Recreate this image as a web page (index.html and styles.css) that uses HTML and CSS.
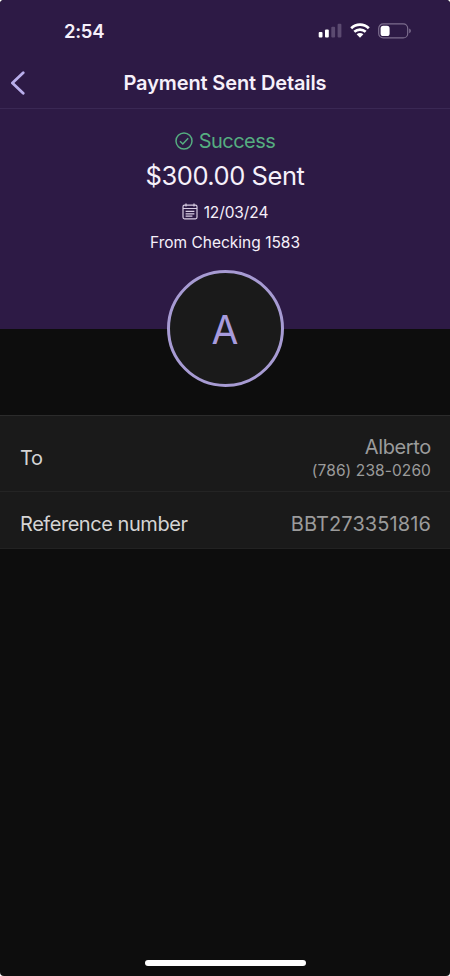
FILE: index.html
```html
<!DOCTYPE html>
<html lang="en">
<head>
    <meta charset="UTF-8">
    <meta name="viewport" content="width=device-width, initial-scale=1.0">
    <title>Payment Sent Details</title>
    <link rel="stylesheet" href="styles.css">
</head>
<body>

    <div class="screen">
        <!-- Status bar -->
        <div class="status-bar">
            <span class="time">2:54</span>
            <div class="status-icons">
                <svg class="signal" width="24" height="16" viewBox="0 0 24 16">
                    <rect x="0.7" y="9" width="3.8" height="5.6" rx="1"/>
                    <rect x="7" y="6.5" width="3.8" height="8.1" rx="1"/>
                    <rect class="dim" x="13.3" y="3.7" width="3.8" height="10.9" rx="1"/>
                    <rect class="dim" x="19.6" y="0.7" width="3.8" height="13.9" rx="1"/>
                </svg>
                <svg class="wifi" width="20" height="16" viewBox="0 0 20 16">
                    <path d="M1.2 5.3C6.2 0.5 13.8 0.5 18.8 5.3"/>
                    <path d="M4.3 8.8C7.6 5.8 12.4 5.8 15.7 8.8"/>
                    <path class="dot" d="M6.6 11.3C8.6 9.5 11.4 9.5 13.4 11.3L10 14.8Z"/>
                </svg>
                <svg class="battery" width="34" height="16" viewBox="0 0 34 16">
                    <rect class="shell" x="0.7" y="0.9" width="29" height="14" rx="4.5"/>
                    <rect class="level" x="2.6" y="2.8" width="9" height="10.2" rx="2.6"/>
                    <path class="tip" d="M31.2 5.6C33.4 6.4 33.4 9.4 31.2 10.2Z"/>
                </svg>
            </div>
        </div>

        <!-- Title bar -->
        <div class="nav-bar">
            <svg class="back" width="16" height="24" viewBox="0 0 16 24">
                <path d="M13.2 1.8 2.4 12 13.2 22.2"/>
            </svg>
            <h1>Payment Sent Details</h1>
        </div>

        <!-- Payment summary -->
        <div class="summary">
            <div class="status">
                <svg width="18" height="18" viewBox="0 0 18 18">
                    <circle cx="9" cy="9" r="8"/>
                    <path d="M5 9.2 7.8 12 13.2 6.2"/>
                </svg>
                <span>Success</span>
            </div>
            <div class="amount">$300.00 Sent</div>
            <div class="date">
                <svg width="16" height="17" viewBox="0 0 16 17">
                    <rect x="1" y="2.2" width="14" height="13.6" rx="1.5"/>
                    <path d="M1 5.5H15M4 0.5V3.6M12 0.5V3.6M3.6 8.4H12.4M3.6 10.8H12.4M3.6 13.2H10.4"/>
                </svg>
                <span>12/03/24</span>
            </div>
            <div class="account">From Checking 1583</div>
            <div class="avatar"><span>A</span></div>
        </div>

        <!-- Details -->
        <div class="details">
            <div class="row row-to">
                <span class="label">To</span>
                <div class="value">
                    <div class="name">Alberto</div>
                    <div class="phone">(786) 238-0260</div>
                </div>
            </div>
            <div class="row row-reference">
                <span class="label">Reference number</span>
                <span class="value reference">BBT273351816</span>
            </div>
        </div>

        <div class="home-indicator"></div>
    </div>

</body>
</html>
```
FILE: styles.css
```css
body {
    margin: 0;
    background-color: #ffffff;
    font-family: 'Inter', 'Liberation Sans', sans-serif;
    color: #f6f0fa;
}

.screen {
    display: flex;
    flex-direction: column;
    width: 100%;
    height: 976px;
    background-color: #0d0d0d;
    border-radius: 4px;
    overflow: hidden;
}

/* Status bar */
.status-bar {
    display: flex;
    justify-content: space-between;
    align-items: center;
    box-sizing: border-box;
    height: 58px;
    padding: 3px 38px 0 64px;
    background-color: #2d1a45;
}

.time {
    font-size: 18.5px;
    font-weight: 600;
    letter-spacing: -0.3px;
}

.status-icons {
    display: flex;
    align-items: center;
    gap: 8px;
}

.signal,
.level,
.tip {
    fill: #ffffff;
}

.signal .dim {
    fill: #5b4a70;
}

.wifi {
    fill: none;
    stroke: #ffffff;
    stroke-width: 2.7;
}

.wifi .dot {
    fill: #ffffff;
    stroke: none;
}

.shell {
    fill: none;
    stroke: #7c6d8d;
    stroke-width: 1.2;
}

.battery .tip {
    fill: #7c6d8d;
}

/* Title bar */
.nav-bar {
    display: grid;
    grid-template-columns: 40px 1fr 40px;
    align-items: center;
    box-sizing: border-box;
    height: 51px;
    border-bottom: 1px solid #3a2854;
    background-color: #2d1a45;
}

.back {
    margin-left: 10px;
    fill: none;
    stroke: #b9aeeb;
    stroke-width: 2.8;
    stroke-linecap: round;
    stroke-linejoin: round;
}

h1 {
    margin: 0;
    font-size: 20px;
    font-weight: 600;
    letter-spacing: -0.12px;
    line-height: 24px;
    text-align: center;
    white-space: nowrap;
}

/* Payment summary */
.summary {
    display: flex;
    flex-direction: column;
    align-items: center;
    box-sizing: border-box;
    height: 220px;
    padding-top: 20px;
    background-color: #2d1a45;
}

.status {
    display: flex;
    align-items: center;
    gap: 6px;
    height: 27px;
    font-size: 20px;
    letter-spacing: -0.55px;
    color: #55ad80;
}

.status svg {
    fill: none;
    stroke: #55ad80;
    stroke-width: 1.5;
}

.amount {
    margin-top: 7px;
    font-size: 25.5px;
    letter-spacing: -0.45px;
    line-height: 32px;
}

.date {
    display: flex;
    align-items: center;
    gap: 6px;
    height: 20px;
    margin-top: 11px;
    font-size: 15.5px;
    letter-spacing: -0.1px;
}

.date svg {
    margin-top: -2px;
    fill: none;
    stroke: #d9cde3;
    stroke-width: 1.2;
}

.account {
    margin-top: 11px;
    font-size: 15.5px;
    line-height: 20px;
}

.avatar {
    display: flex;
    justify-content: center;
    align-items: center;
    flex-shrink: 0;
    box-sizing: border-box;
    width: 117px;
    height: 117px;
    margin-top: 17px;
    padding-top: 2px;
    border: 3px solid #a79bd3;
    border-radius: 50%;
    background-color: #1a1a1a;
    color: #a79bdd;
    font-size: 39px;
}

/* Details */
.details {
    margin-top: 86px;
    background-color: #1a1a1a;
    border-top: 1px solid #2b2b2b;
    border-bottom: 1px solid #222222;
}

.row {
    display: flex;
    justify-content: space-between;
    align-items: center;
    box-sizing: border-box;
    padding: 0 19px 0 20px;
    font-size: 20px;
}

.row-to {
    height: 76px;
    padding-top: 9px;
    border-bottom: 1px solid #242424;
}

.row-reference {
    height: 56px;
    padding-top: 8px;
}

.label {
    letter-spacing: -0.45px;
    color: #d4d4d4;
}

.value {
    color: #9b9b9b;
    text-align: right;
}

.name {
    letter-spacing: -0.35px;
    line-height: 24px;
}

.phone {
    font-size: 15.5px;
    letter-spacing: 0.1px;
    line-height: 23px;
}

.reference {
    letter-spacing: 0.1px;
}

/* Home indicator */
.home-indicator {
    width: 161px;
    height: 6px;
    margin: auto auto 10px;
    border-radius: 3px;
    background-color: #ffffff;
}
```
